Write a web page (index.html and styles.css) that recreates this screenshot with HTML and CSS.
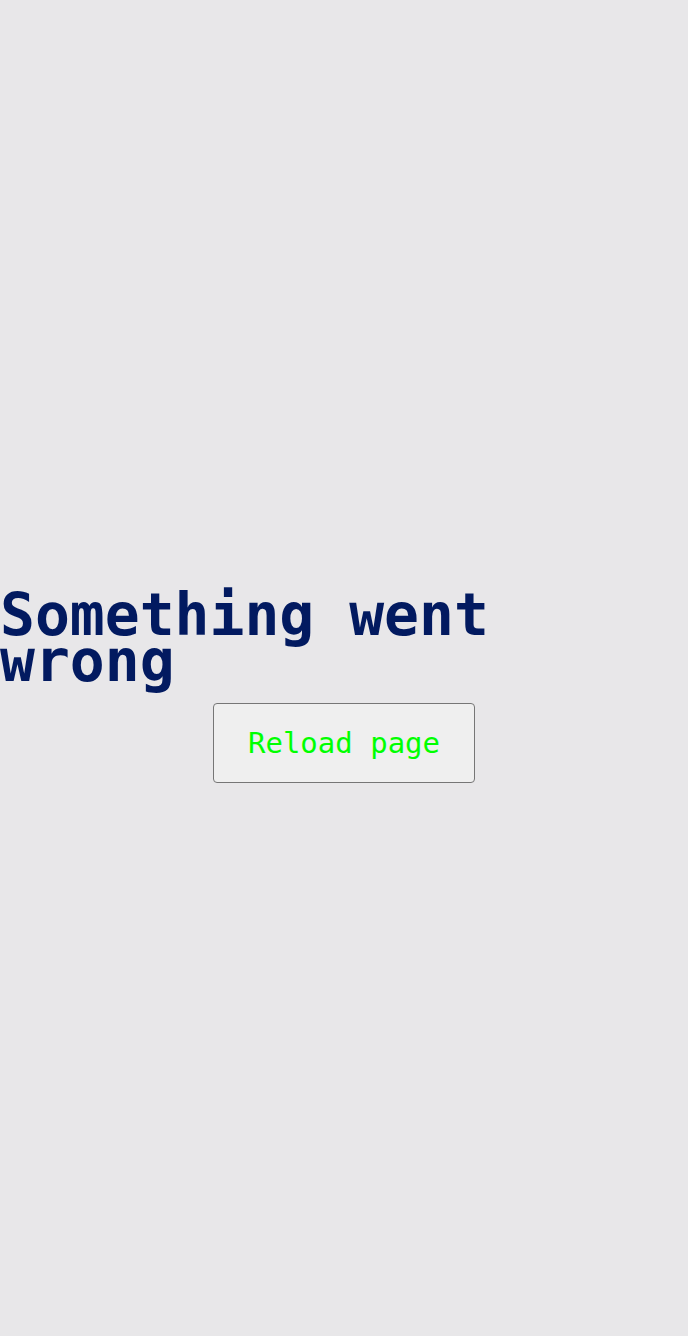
FILE: index.html
```html
<!DOCTYPE html>
<html lang="en">
<head>
<meta charset="utf-8">
<title>Error</title>
<link rel="stylesheet" href="styles.css">
</head>
<body>
<main class="error">
  <h1 class="error-title">Something went wrong</h1>
  <button class="reload-btn" type="button">Reload page</button>
</main>
</body>
</html>
```

FILE: styles.css
```css
html, body {
  margin: 0;
  padding: 0;
  background: #e8e7e9;
}
.error {
  box-sizing: border-box;
  min-height: 100vh;
  padding-top: 39px;
  display: flex;
  flex-direction: column;
  justify-content: center;
  align-items: stretch;
  gap: 19px;
  font-family: "DejaVu Sans Mono", monospace;
}
.error-title {
  margin: 0;
  font-family: "DejaVu Sans Mono", monospace;
  font-weight: bold;
  font-size: 58px;
  line-height: 46px;
  color: #021a60;
}
.reload-btn {
  align-self: center;
  font-family: "DejaVu Sans Mono", monospace;
  font-size: 29px;
  color: #00ff00;
  background: #efefef;
  border: 1px solid #767676;
  border-radius: 4px;
  padding: 22px 34px;
}
```
